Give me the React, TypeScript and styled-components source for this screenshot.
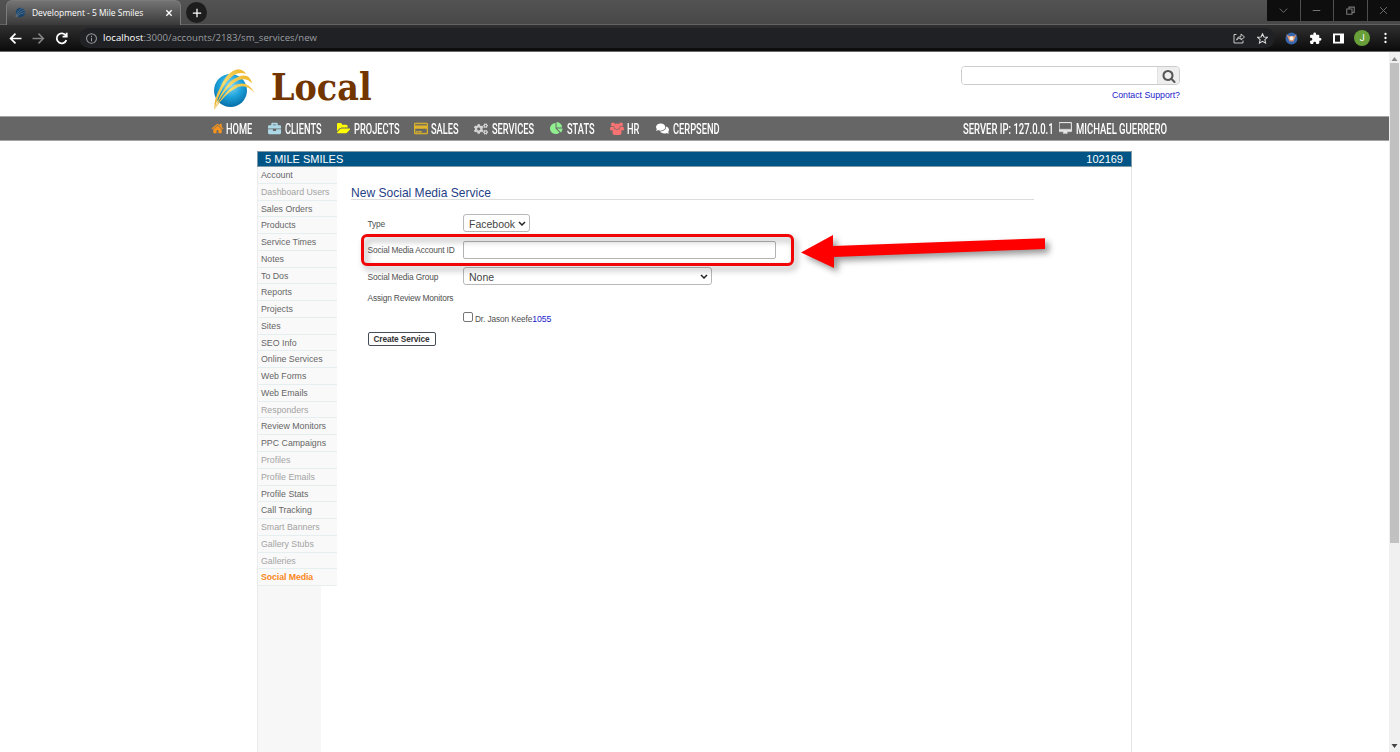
import React from "react";
import styled, { createGlobalStyle } from "styled-components";
import { FaBriefcase, FaCogs, FaComments } from "react-icons/fa";
import { MdExtension } from "react-icons/md";

const GlobalStyle = createGlobalStyle`
  * { box-sizing: border-box; }
  body { margin: 0; overflow: hidden; background: #fff; font-family: "Liberation Sans", Arial, sans-serif; }
`;

const Window = styled.div`
  width: 1400px;
  height: 752px;
  display: flex;
  flex-direction: column;
  overflow: hidden;
`;

/* ---------- browser frame ---------- */

const TabStrip = styled.div`
  height: 25px;
  display: flex;
  align-items: flex-start;
  background: linear-gradient(#535353, #484848);
  padding-left: 6px;
  flex: none;
  border-bottom: 1px solid #626262;
`;

const Tab = styled.div`
  width: 175px;
  height: 25px;
  display: flex;
  align-items: center;
  padding: 0 7px 1px 8px;
  border: 1px solid #7b7b7b;
  border-bottom: 0;
  border-radius: 6px 6px 0 0;
  background: linear-gradient(#747474, #393939);
`;

const TabTitle = styled.span`
  flex: 1;
  margin-left: 6px;
  color: #fff;
  font: 8.45px/12px "Open Sans", sans-serif;
  white-space: nowrap;
`;

const NewTab = styled.div`
  width: 21px;
  height: 21px;
  margin: 2px 0 0 5px;
  border-radius: 50%;
  background: #1d1d1d;
  display: flex;
  align-items: center;
  justify-content: center;
`;

const WindowButtons = styled.div`
  margin-left: auto;
  display: flex;
  gap: 1px;
`;

const WindowButton = styled.div`
  width: 32.5px;
  height: 21px;
  background: #0e0e0e;
  display: flex;
  align-items: center;
  justify-content: center;
`;

const Toolbar = styled.div`
  height: 27px;
  flex: none;
  display: flex;
  align-items: center;
  background: linear-gradient(#303030, #0b0b0b);
  border-bottom: 1px solid #6b6b6b;
  padding: 0 10px 0 9px;
`;

const NavButtons = styled.div`
  width: 70px;
  display: flex;
  gap: 10px;
`;

const AddressBar = styled.div`
  width: 1196px;
  height: 20px;
  border-radius: 10px;
  background: #202124;
  display: flex;
  align-items: center;
  padding: 0 7px 0 7px;
`;

const Url = styled.span`
  margin-left: 6px;
  flex: 1;
  color: #9a9da1;
  font: 9.6px/14px "Open Sans", sans-serif;
  letter-spacing: 0.03px;
  b { font-weight: 400; color: #fff; }
`;

const BarActions = styled.div`
  display: flex;
  align-items: center;
  gap: 12px;
`;

const Extensions = styled.div`
  flex: 1;
  display: flex;
  align-items: center;
  justify-content: space-between;
  padding-left: 10px;
`;

const Avatar = styled.div`
  width: 16px;
  height: 16px;
  border-radius: 50%;
  background: #689f38;
  color: #fff;
  font: 9px/16px Roboto, sans-serif;
  text-align: center;
`;

/* ---------- page ---------- */

const Viewport = styled.div`
  flex: 1;
  min-height: 0;
  display: flex;
`;

const Page = styled.div`
  width: 1389px;
  display: flex;
  flex-direction: column;
`;

const Scrollbar = styled.div`
  width: 11px;
  background: #f0f0f0;
  display: flex;
  flex-direction: column;
  align-items: center;
  justify-content: space-between;
  padding: 5px 0 4px;
`;

const Thumb = styled.div`
  width: 9px;
  height: 480px;
  background: #c1c1c1;
  margin: 2px 0 auto;
`;

const Header = styled.header`
  height: 64px;
  flex: none;
  display: flex;
  justify-content: space-between;
  padding: 14px 209px 0 212px;
`;

const Brand = styled.div`
  display: flex;
  gap: 16px;
`;

const BrandName = styled.span`
  color: #733500;
  font: bold 37.2px/43px "DejaVu Serif Condensed", "DejaVu Serif", serif;
  font-stretch: condensed;
`;

const SearchArea = styled.div`
  width: 219px;
  display: flex;
  flex-direction: column;
  align-items: flex-end;
`;

const SearchBox = styled.div`
  width: 219px;
  height: 19px;
  display: flex;
  border: 1px solid #ccc;
  border-radius: 4px;
  overflow: hidden;
`;

const SearchInput = styled.input`
  flex: 1;
  min-width: 0;
  border: 0;
  border-right: 1px solid #e2e2e2;
  background: #fff;
`;

const SearchButton = styled.button`
  width: 21px;
  padding: 0;
  border: 0;
  background: #eee;
  display: flex;
  align-items: center;
  justify-content: center;
`;

const Support = styled.a`
  margin-top: 4px;
  color: #1a1acb;
  font-size: 8.75px;
  line-height: 12px;
`;

const NavBar = styled.nav`
  height: 25px;
  flex: none;
  display: flex;
  align-items: center;
  background: #666;
  border: solid #a3a3a3;
  border-width: 1px 0;
  padding-left: 211px;
`;

const NavItem = styled.div<{ $width: number }>`
  width: ${(p) => p.$width}px;
  display: flex;
  align-items: center;
  flex: none;
`;

const NavIcon = styled.span<{ $width: number; $color: string }>`
  width: ${(p) => p.$width}px;
  flex: none;
  color: ${(p) => p.$color};
  display: flex;
  align-items: center;
`;

const NavText = styled.span<{ $scale?: number }>`
  color: #fff;
  font: 500 14.6px/20px Roboto, sans-serif;
  white-space: nowrap;
  padding-top: 1px;
  transform: scaleX(${(p) => p.$scale ?? 0.636});
  transform-origin: left;
`;

const Panel = styled.main`
  width: 875px;
  margin: 10px 0 0 257px;
  flex: 1;
  display: flex;
  flex-direction: column;
  border-left: 1px solid #ececec;
  border-right: 1px solid #e4e4e4;
`;

const PanelTitle = styled.div`
  height: 16px;
  margin: 0 -1px;
  flex: none;
  display: flex;
  justify-content: space-between;
  padding: 0 8px 0 7px;
  border: 1px solid #7f99a6;
  background: #005586;
  color: #fff;
  font-size: 11px;
  line-height: 15px;
`;

const PanelBody = styled.div`
  flex: 1;
  display: flex;
`;

const Sidebar = styled.div`
  width: 79px;
  flex: none;
  display: flex;
  flex-direction: column;
`;

const SideItem = styled.a<{ $tone?: "muted" | "active" }>`
  height: 16.77px;
  flex: none;
  padding-left: 3px;
  border-bottom: 1px solid #e6efef;
  background: #f9f9f9;
  color: ${(p) => (p.$tone === "muted" ? "#a3a3a3" : p.$tone === "active" ? "#f98a1d" : "#666")};
  font-size: 8.8px;
  font-weight: ${(p) => (p.$tone === "active" ? 700 : 400)};
  letter-spacing: ${(p) => (p.$tone === "active" ? "-0.1px" : "0")};
  line-height: 17.4px;
  white-space: nowrap;
`;

const SidebarFill = styled.div`
  width: 63px;
  flex: 1;
  background: #f7f7f7;
`;

const Content = styled.section`
  margin-left: 14px;
  width: 683px;
  padding-top: 18px;
`;

const Heading = styled.h1`
  margin: 0;
  height: 15px;
  border-bottom: 1px solid #ddd;
  color: #1f3f86;
  font-size: 12.05px;
  font-weight: 400;
  line-height: 16px;
`;

const Form = styled.form`
  position: relative;
  padding: 14px 0 0 16.5px;
  display: flex;
  flex-direction: column;
  align-items: flex-start;
`;

const Field = styled.div<{ $height: number }>`
  height: ${(p) => p.$height}px;
  display: flex;
  align-items: center;
`;

const Label = styled.label`
  width: 95.5px;
  padding-top: 1px;
  color: #505050;
  font-size: 8.4px;
  letter-spacing: -0.16px;
  white-space: nowrap;
`;

const SelectBox = styled.div<{ $width: number }>`
  width: ${(p) => p.$width}px;
  height: 18px;
  display: flex;
  align-items: center;
  justify-content: space-between;
  padding: 1px 3px 0 5px;
  border: 1px solid #b8b8b8;
  border-radius: 3px;
  background: #fff;
  color: #444;
  font-size: 10.5px;
`;

const TextInput = styled.input`
  width: 313px;
  height: 18px;
  border: 1px solid #b4b4b4;
  border-radius: 2px;
  background: transparent;
`;

const CheckRow = styled.div`
  height: 14px;
  margin: 0 0 0 95.5px;
  display: flex;
  align-items: center;
  color: #505050;
  font-size: 8.3px;
  letter-spacing: -0.12px;
  line-height: 12px;
  a { color: #1a1acb; font-size: 8.7px; letter-spacing: -0.05px; margin-top: 3px; }
  span { margin: 3px 0 0 2px; }
`;

const Checkbox = styled.input`
  appearance: none;
  width: 10px;
  height: 10px;
  margin: 0;
  border: 1px solid #767676;
  border-radius: 2px;
  background: #fff;
`;

const Submit = styled.button`
  width: 68px;
  height: 14px;
  margin-top: 8px;
  padding: 0;
  border: 1px solid #444c58;
  border-radius: 2px;
  background: #fff;
  color: #333;
  font: bold 8.3px/12px "Liberation Sans", Arial, sans-serif;
  letter-spacing: -0.12px;
`;

const Highlight = styled.div`
  position: absolute;
  left: 10px;
  top: 34px;
  width: 433px;
  height: 32px;
  border: 3px solid #f00606;
  border-radius: 6px;
  filter: drop-shadow(3px 4px 3px rgba(0, 0, 0, 0.35));
  pointer-events: none;
`;

const Arrow = styled.svg`
  position: absolute;
  left: 439px;
  top: 26px;
  overflow: visible;
  filter: drop-shadow(4px 4px 3px rgba(0, 0, 0, 0.4));
`;

/* ---------- drawings ---------- */

const Stroke = ({ d, w = 12, h = w, sw = 1.5, color = "#fff", box = "0 0 12 12" }: {
  d: string; w?: number; h?: number; sw?: number; color?: string; box?: string;
}) => (
  <svg width={w} height={h} viewBox={box} fill="none" stroke={color} strokeWidth={sw}>
    <path d={d} />
  </svg>
);

const Solid = ({ d, size = 13, wide = 1792, bold = 0 }: { d: string; size?: number; wide?: number; bold?: number }) => (
  <svg width={(size * wide) / 1792} height={size} viewBox={`0 0 ${wide} 1792`} fill="currentColor" stroke="currentColor" strokeWidth={bold}>
    <path d={d} />
  </svg>
);

const homePath = "M1472 992v480q0 26-19 45t-45 19h-384v-384h-256v384h-384q-26 0-45-19t-19-45v-480q0-1 .5-3t.5-3l575-474 575 474q1 2 1 6zm223-69l-62 74q-8 9-21 11h-3q-13 0-21-7l-692-577-692 577q-12 8-24 7-13-2-21-11l-62-74q-8-10-7-23.5t11-21.5l719-599q32-26 76-26t76 26l244 204v-195q0-14 9-23t23-9h192q14 0 23 9t9 23v408l219 182q10 8 11 21.5t-7 23.5z";
const folderPath = "M1815 952q0 31-31 66l-336 396q-43 51-120.5 86.5t-143.5 35.5h-1088q-34 0-60.5-13t-26.5-43q0-31 31-66l336-396q43-51 120.5-86.5t143.5-35.5h1088q34 0 60.5 13t26.5 43zm-343-344v160h-832q-94 0-197 47.5t-164 119.5l-337 396-5 6q0-4-.5-12.5t-.5-12.5v-960q0-92 66-158t158-66h320q92 0 158 66t66 158v32h544q92 0 158 66t66 158z";
const cardPath = "M1760 128q66 0 113 47t47 113v1216q0 66-47 113t-113 47h-1600q-66 0-113-47t-47-113v-1216q0-66 47-113t113-47h1600zm-1600 128q-13 0-22.5 9.5t-9.5 22.5v224h1664v-224q0-13-9.5-22.5t-22.5-9.5h-1600zm1600 1280q13 0 22.5-9.5t9.5-22.5v-608h-1664v608q0 13 9.5 22.5t22.5 9.5h1600zm-1504-128v-128h256v128h-256zm384 0v-128h384v128h-384z";
const piePath = "M768 890l546 546q-106 108-247.5 168t-298.5 60q-209 0-385.5-103t-279.5-279.5-103-385.5 103-385.5 279.5-279.5 385.5-103v762zm187 6h773q0 157-60 298.5t-168 247.5zm709-128h-768v-768q209 0 385.5 103t279.5 279.5 103 385.5z";
const desktopPath = "M1728 992v-832q0-13-9.5-22.5t-22.5-9.5h-1600q-13 0-22.5 9.5t-9.5 22.5v832q0 13 9.5 22.5t22.5 9.5h1600q13 0 22.5-9.5t9.5-22.5zm128-832v1088q0 66-47 113t-113 47h-544q0 37 16 77.5t32 71 16 43.5q0 26-19 45t-45 19h-512q-26 0-45-19t-19-45q0-14 16-44t32-70 16-78h-544q-66 0-113-47t-47-113v-1088q0-66 47-113t113-47h1600q66 0 113 47t47 113z";
const searchPath = "M1216 832q0-185-131.5-316.5t-316.5-131.5-316.5 131.5-131.5 316.5 131.5 316.5 316.5 131.5 316.5-131.5 131.5-316.5zm512 832q0 52-38 90t-90 38q-54 0-90-38l-343-342q-179 124-399 124-143 0-273.5-55.5t-225-150-150-225-55.5-273.5 55.5-273.5 150-225 225-150 273.5-55.5 273.5 55.5 225 150 150 225 55.5 273.5q0 220-124 399l343 343q37 37 37 90z";

const UsersIcon = () => (
  <svg width="14" height="13" viewBox="0 0 28 26" fill="currentColor">
    <circle cx="6" cy="5" r="4" />
    <circle cx="22" cy="5" r="4" />
    <circle cx="14" cy="8.5" r="5.6" />
    <path d="M3 9 Q0 9 0 14 Q0 17 3 17 H6 Q7 14.500 9.500 14 Q7 12 7.500 9.500 Q5 11 3 9Z M25 9 Q28 9 28 14 Q28 17 25 17 H22 Q21 14.500 18.500 14 Q21 12 20.500 9.500 Q23 11 25 9Z" />
    <path d="M9.500 14 Q5 14 5 22 Q5 26 9 26 H19 Q23 26 23 22 Q23 14 18.500 14 Q14 17 9.500 14Z" />
  </svg>
);

const Logo = () => (
  <svg width="43" height="45" viewBox="0 0 43 45">
    <defs>
      <radialGradient id="globe" cx="0.5" cy="0.35" r="0.68">
        <stop offset="0" stopColor="#8fdcf6" />
        <stop offset="0.5" stopColor="#1ea3dc" />
        <stop offset="1" stopColor="#0469a3" />
      </radialGradient>
      <linearGradient id="wheat" gradientUnits="userSpaceOnUse" x1="2" x2="40" y1="44" y2="8">
        <stop offset="0" stopColor="#e8a91f" />
        <stop offset="0.5" stopColor="#f7dc70" />
        <stop offset="1" stopColor="#edb020" />
      </linearGradient>
    </defs>
    <circle cx="18.500" cy="24.500" r="16.500" fill="url(#globe)" />
    <g fill="url(#wheat)">
      <path d="M2.300 44 Q2 32 8 22 Q15 5 26 3.300 Q32 4 34 8 Q28 5.500 22 9 Q9 18 2.300 44Z" />
      <path d="M2.300 44 Q8 26 19 15 Q29 7.500 35 10 Q39 12 40 17.500 Q35 11.500 27 14 Q13 20 2.300 44Z" />
      <path d="M2.300 44 Q11 27 23 19 Q36 13.500 42.500 27 Q35 18 26 21 Q13 27 2.300 44Z" />
    </g>
  </svg>
);

const FavIcon = () => (
  <svg width="11" height="11" viewBox="0 0 11 11">
    <circle cx="5.500" cy="5.500" r="4.700" fill="#17456f" />
    <path d="M1 10 Q2 3 8 1 M1 10 Q4 4 10 3 M1 10 Q5 6 10 5.500" fill="none" stroke="#5c7184" strokeWidth="0.800" />
  </svg>
);

const Chevron = () => <Stroke w={8} sw={2.2} color="#222" d="M1.500 3 L6 7.500 L10.500 3" />;

type Tone = "muted" | "active" | undefined;
const sideItems: [string, Tone?][] = [
  ["Account"], ["Dashboard Users", "muted"], ["Sales Orders"], ["Products"], ["Service Times"],
  ["Notes"], ["To Dos"], ["Reports"], ["Projects"], ["Sites"], ["SEO Info"], ["Online Services"],
  ["Web Forms"], ["Web Emails"], ["Responders", "muted"], ["Review Monitors"], ["PPC Campaigns"],
  ["Profiles", "muted"], ["Profile Emails", "muted"], ["Profile Stats"], ["Call Tracking"],
  ["Smart Banners", "muted"], ["Gallery Stubs", "muted"], ["Galleries", "muted"], ["Social Media", "active"],
];

const navItems = [
  { text: "HOME", width: 57, iconWidth: 15, color: "#f7941e", icon: <Solid d={homePath} /> },
  { text: "CLIENTS", width: 69, iconWidth: 17, color: "#add8e6", icon: <FaBriefcase size={13} /> },
  { text: "PROJECTS", width: 77, iconWidth: 17, color: "#ffff00", icon: <Solid d={folderPath} wide={1856} /> },
  { text: "SALES", width: 60, iconWidth: 17, color: "#dfb62b", icon: <Solid d={cardPath} wide={1920} bold={70} /> },
  { text: "SERVICES", width: 76, iconWidth: 18, color: "#d3d3d3", icon: <FaCogs size={14} /> },
  { text: "STATS", width: 60, iconWidth: 17, color: "#90ee90", icon: <Solid d={piePath} /> },
  { text: "HR", width: 46, iconWidth: 17, color: "#fa7373", icon: <UsersIcon /> },
  { text: "CERPSEND", width: 307, iconWidth: 17, color: "#fff", icon: <FaComments size={13} /> },
];

export default function App() {
  return (
    <Window>
      <GlobalStyle />
      <TabStrip>
        <Tab>
          <FavIcon />
          <TabTitle>Development - 5 Mile Smiles</TabTitle>
          <Stroke w={8} sw={2} d="M2 2 L10 10 M10 2 L2 10" />
        </Tab>
        <NewTab><Stroke w={10} d="M6 1 V11 M1 6 H11" /></NewTab>
        <WindowButtons>
          <WindowButton><Stroke w={9} sw={1.2} color="#777" d="M1 3.500 L6 8.500 L11 3.500" /></WindowButton>
          <WindowButton><Stroke w={9} sw={1.3} color="#777" d="M1 6 H11" /></WindowButton>
          <WindowButton><Stroke w={9} sw={1.5} color="#777" d="M1 4 H8 V11 H1 Z M4 3.500 V1.500 H11 V8.500 H8.500" /></WindowButton>
          <WindowButton><Stroke w={9} sw={1.2} color="#777" d="M1.500 1.500 L10.500 10.500 M10.500 1.500 L1.500 10.500" /></WindowButton>
        </WindowButtons>
      </TabStrip>
      <Toolbar>
        <NavButtons>
          <Stroke w={13} sw={1.6} d="M11.500 6 H1.500 M6 1.500 L1.500 6 L6 10.500" />
          <Stroke w={13} sw={1.4} color="#858585" d="M0.500 6 H10.500 M6 1.500 L10.500 6 L6 10.500" />
          <Stroke w={13} sw={1.7} d="M10 3.200 A4.600 4.600 0 1 0 10.500 7.500 M10.800 0.800 V4.300 H7" />
        </NavButtons>
        <AddressBar>
          <Stroke w={11} sw={1.1} color="#9a9da1" d="M6 0.700 A5.300 5.300 0 1 0 6.010 0.700 M6 5.300 V9 M6 3 V4.300" />
          <Url><b>localhost</b>:3000/accounts/2183/sm_services/new</Url>
          <BarActions>
            <Stroke w={12} sw={1} color="#c6c6c6" d="M3.500 2.500 H1 V11 H10 V8.500 M3.500 8 Q4 4.500 8 4.500 V2 L11.500 5 L8 8 V6 Q5 6 3.500 8Z" />
            <Stroke w={11} sw={1.1} color="#ddd" d="M6 0.800 L7.600 4.300 L11.400 4.700 L8.600 7.200 L9.400 11 L6 9 L2.600 11 L3.400 7.200 L0.600 4.700 L4.400 4.300Z" />
          </BarActions>
        </AddressBar>
        <Extensions>
          <svg width="13" height="13" viewBox="0 0 13 13">
            <circle cx="6.500" cy="6.500" r="6" fill="#3767ad" />
            <path d="M1.500 2.500 L4 4 H9 L11.500 2.500 L10 6 L8.500 9.500 H4.500 L3 6Z" fill="#d9916f" />
            <circle cx="6.500" cy="6.300" r="2" fill="#fff1df" />
          </svg>
          <MdExtension size={13} color="#fff" />
          <svg width="11" height="11" viewBox="0 0 11 11">
            <path fill="#fff" fillRule="evenodd" d="M0 0.500H11V10.500H0Z M2 2.300V8.700H7V2.300Z" />
          </svg>
          <Avatar>J</Avatar>
          <svg width="9" height="12" viewBox="0 0 9 12" fill="#fff">
            <circle cx="4.500" cy="2" r="1.150" /><circle cx="4.500" cy="6" r="1.150" /><circle cx="4.500" cy="10" r="1.150" />
          </svg>
        </Extensions>
      </Toolbar>
      <Viewport>
        <Page>
          <Header>
            <Brand>
              <Logo />
              <BrandName>Local</BrandName>
            </Brand>
            <SearchArea>
              <SearchBox>
                <SearchInput />
                <SearchButton type="button"><NavIcon $width={14} $color="#555"><Solid d={searchPath} size={14} /></NavIcon></SearchButton>
              </SearchBox>
              <Support>Contact Support?</Support>
            </SearchArea>
          </Header>
          <NavBar>
            {navItems.map((n) => (
              <NavItem key={n.text} $width={n.width}>
                <NavIcon $width={n.iconWidth} $color={n.color}>{n.icon}</NavIcon>
                <NavText>{n.text}</NavText>
              </NavItem>
            ))}
            <NavItem $width={96}><NavText $scale={0.65}>SERVER IP: 127.0.0.1</NavText></NavItem>
            <NavIcon $width={17} $color="#e6e6e6"><Solid d={desktopPath} wide={1920} size={12.5} bold={50} /></NavIcon>
            <NavText $scale={0.65}>MICHAEL GUERRERO</NavText>
          </NavBar>
          <Panel>
            <PanelTitle><span>5 MILE SMILES</span><span>102169</span></PanelTitle>
            <PanelBody>
              <Sidebar>
                {sideItems.map(([text, tone]) => <SideItem key={text} $tone={tone}>{text}</SideItem>)}
                <SidebarFill />
              </Sidebar>
              <Content>
                <Heading>New Social Media Service</Heading>
                <Form>
                  <Field $height={18}><Label>Type</Label><SelectBox $width={67}>Facebook<Chevron /></SelectBox></Field>
                  <Field $height={35}><Label>Social Media Account ID</Label><TextInput /></Field>
                  <Field $height={18}><Label>Social Media Group</Label><SelectBox $width={249}>None<Chevron /></SelectBox></Field>
                  <Field $height={25}><Label>Assign Review Monitors</Label></Field>
                  <CheckRow><Checkbox type="checkbox" /><span>Dr. Jason Keefe</span><a>1055</a></CheckRow>
                  <Submit type="button">Create Service</Submit>
                  <Highlight />
                  <Arrow width="260" height="50">
                    <path d="M11 26.500 L43 9 V20 L255 12.300 V23 L44 31 V42 Z" fill="#ff0000" />
                  </Arrow>
                </Form>
              </Content>
            </PanelBody>
          </Panel>
        </Page>
        <Scrollbar>
          <svg width="7" height="4"><path d="M3.500 0 L6.500 4 H0.500Z" fill="#888" /></svg>
          <Thumb />
          <svg width="7" height="4"><path d="M3.500 4 L6.500 0 H0.500Z" fill="#444" /></svg>
        </Scrollbar>
      </Viewport>
    </Window>
  );
}
